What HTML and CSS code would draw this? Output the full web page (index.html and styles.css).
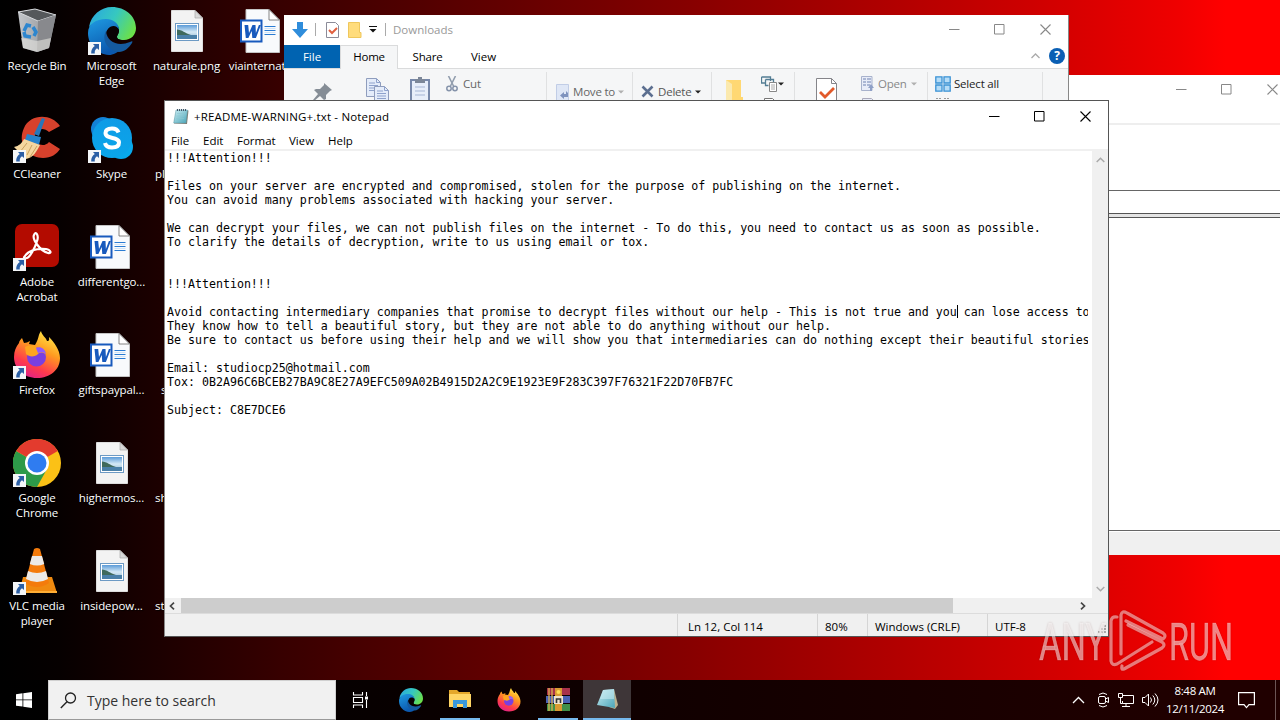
FILE: index.html
```html
<!DOCTYPE html>
<html lang="en">
<head>
<meta charset="utf-8">
<title>Desktop</title>
<link rel="stylesheet" href="styles.css">
</head>
<body>
<svg class="defs" width="0" height="0">
  <defs>
    <linearGradient id="edgeA" x1="0" y1="0.2" x2="1" y2="0.6"><stop offset="0" stop-color="#2aa8de"/><stop offset=".5" stop-color="#36c8c0"/><stop offset="1" stop-color="#6be04a"/></linearGradient>
    <linearGradient id="edgeB" x1="0" y1="0" x2="0.4" y2="1"><stop offset="0" stop-color="#1f9be2"/><stop offset="1" stop-color="#0b58ae"/></linearGradient>
    <linearGradient id="ffA" x1="0.8" y1="0" x2="0.3" y2="1"><stop offset="0" stop-color="#fff04a"/><stop offset=".4" stop-color="#ff9a20"/><stop offset=".75" stop-color="#ff3a4c"/><stop offset="1" stop-color="#e0218a"/></linearGradient>
    <linearGradient id="sky" x1="0" y1="0" x2="0" y2="1"><stop offset="0" stop-color="#5b9bd8"/><stop offset=".5" stop-color="#d5e9f5"/><stop offset="1" stop-color="#8fb5cf"/></linearGradient>
    <linearGradient id="skp" x1="0" y1="0" x2="0" y2="1"><stop offset="0" stop-color="#0f9be6"/><stop offset="1" stop-color="#0aa6ea"/></linearGradient>
    <linearGradient id="bin" x1="0" y1="0" x2="1" y2="0"><stop offset="0" stop-color="#c3c6ca"/><stop offset=".6" stop-color="#a1a4a8"/><stop offset="1" stop-color="#77797c"/></linearGradient>
    <linearGradient id="note" x1="0" y1="0" x2="1" y2="1"><stop offset="0" stop-color="#c9ecf2"/><stop offset="1" stop-color="#4aa5b8"/></linearGradient>
    <symbol id="shortcut" viewBox="0 0 13 13"><rect width="13" height="13" fill="#f4f6f8"/><path d="M5 2h6v6L9 6.200C7.200 7.500 6.500 9 6.800 11.500H3.200C3 8 4.500 5.500 6.800 4z" fill="#2b5fa5"/></symbol>
    <symbol id="edge" viewBox="0 0 48 48">
      <path d="M1 20C3 8 13 0 24 0c13 0 24 9 24 21 0 7-5 12-12 12-6 0-7-2-7-3 0-2 2-3 2-7 0-5-5-9-11-9-9 0-16 3-19 6z" fill="url(#edgeA)"/>
      <path d="M0 26C0 17 8 12 18 12c7 0 13 4 13 11-3-4-11-5-13 3-2 9 7 16 16 14-4 6-9 8-13 8C9 47 0 38 0 26z" fill="url(#edgeB)"/>
      <path d="M18 24c-5 9 2 20 13 21 5 0 10-4 13-9 1-2 0-2-2-1-12 5-23 0-24-11z" fill="#155a9f"/>
      <path d="M20 22c3-4 9-4 11 1 0 4-2 5-2 7 0 2 2 3 5 3-8 3-16-3-14-11z" fill="#0a0204"/>
    </symbol>
    <symbol id="firefox" viewBox="0 0 48 48">
      <path d="M6 12c0-2 2-4 3-5l2 5c2 0 4-1 6-2l-1 3 6 1c4-6 3-10 6-14 1 5 5 6 6 10 3 0 2-2 2-4 5 5 11 13 11 21 0 12-10 20-23 20S1 38 1 26c0-6 2-10 5-14z" fill="url(#ffA)"/>
      <circle cx="23.500" cy="26" r="9.500" fill="#7a3fe0"/><path d="M12 16c4-2 9-3 12 1 4 0 8 3 8 6-3-2-5-2-8 1-3 2-8 2-11-1z" fill="#ffa51f"/><path d="M23 17c4-2 9 0 10 6-2-2-5-2-8-1z" fill="#9059ff"/>
    </symbol>
    <symbol id="word" viewBox="0 0 40 44">
      <path d="M6 .5h23L39.500 11v32.500H6z" fill="#f8fafc" stroke="#c4c4c4"/><path d="M29 .5V11h10.500z" fill="#fff" stroke="#666" stroke-width=".8"/>
      <path d="M24.500 17.500h11M24.500 21.500h11M24.500 25.500h11" stroke="#2b7cd3"/><path d="M24.500 19.500h11M24.500 23.500h11" stroke="#cfe3f6"/>
      <rect x="1" y="11.500" width="20.500" height="21" fill="#fff" stroke="#185abd" stroke-width="2"/>
      <path d="M4.500 16h3.700l.8 8 3.500-8h3l.4 8 3-8h2l-5 13h-3.600l-.6-7-3.300 7H5.800z" fill="#185abd"/>
    </symbol>
    <symbol id="picture" viewBox="0 0 32 42">
      <path d="M.5.500H24L31.500 8v33.500H.5z" fill="#f3f3f3" stroke="#ddd"/><path d="M24 .5V8h7.500z" fill="#d9d9d9" stroke="#aaa" stroke-width=".7"/>
      <rect x="4.500" y="13.500" width="23" height="17" fill="#fff" stroke="#6d9ac4"/><rect x="6" y="15" width="20" height="14" fill="url(#sky)"/><path d="M6 19.500c5 0 8 4 14 5.500H6z" fill="#3f6a5c"/><path d="M6 25h20v4H6z" fill="#4a80a8"/>
    </symbol>
    <symbol id="notepad" viewBox="0 0 16 16">
      <path d="M3.500 1.500L15.500 2l-1.500 13.500L1 15z" fill="#807b70"/><path d="M3 1.500h11.500L13 14.500H.7z" fill="url(#note)" stroke="#5d9ba8" stroke-width=".5"/><path d="M4 1.500h10" stroke="#456" stroke-width="1.800" stroke-dasharray="1 1"/><path d="M4 5h8M3.500 7.500h8M3.200 10h8" stroke="#8dc6d2" stroke-width=".6"/>
    </symbol>
    <symbol id="min" viewBox="0 0 11 11"><path d="M0 5.500h10.500" stroke="currentColor"/></symbol>
    <symbol id="max" viewBox="0 0 11 11"><path d="M.5.500h9.500v9.500H.5z" fill="none" stroke="currentColor"/></symbol>
    <symbol id="close" viewBox="0 0 11 11"><path d="M.5.500l10 10m0-10l-10 10" stroke="currentColor" stroke-width="1.100"/></symbol>
    <symbol id="down" viewBox="0 0 6 4"><path d="M0 .5h6L3 3.500z" fill="currentColor"/></symbol>
    <symbol id="doc" viewBox="0 0 15 19"><path d="M.5.500h10l4 4v14H.5z" fill="#e4ecfa" stroke="#8f9dbd"/><path d="M10.500.500v4h4M3 5h6M3 7.500h9M3 10h9M3 12.500h9" fill="none" stroke="#8ea2cc"/></symbol>
  </defs>
</svg>

<div class="desktop">
  <div class="icons">
    <div class="item"><div class="pic"><svg width="48" height="48" viewBox="0 0 48 48"><path d="M5 5l5 36 14 4 12-4 7-33-21-6z" fill="url(#bin)"/><path d="M5 5L22 2l21 6-18 6z" fill="#55585b" stroke="#d7d9dc"/><path d="M25 14L43 8l-7 33-12 4z" fill="#88898d"/><path d="M8 31l16 3 14-3-2 10-12 4-14-4z" fill="#e4e2dd" opacity=".6"/><g fill="none" stroke="#2d86cf" stroke-width="3.500"><path d="M11 24l3-6 4 1M20 20l3 5-2 4M18 30l-6-1-1-4"/></g></svg></div><p>Recycle Bin</p></div>
    <div class="item"><div class="pic"><svg width="48" height="48"><use href="#edge"/></svg><svg class="sc"><use href="#shortcut"/></svg></div><p>Microsoft<br>Edge</p></div>
    <div class="item"><div class="pic"><svg width="32" height="42"><use href="#picture"/></svg></div><p>naturale.png</p></div>
    <div class="item"><div class="pic wordpic"><svg width="40" height="44"><use href="#word"/></svg></div><p>viainternat...</p></div>

    <div class="item"><div class="pic"><svg width="48" height="48" viewBox="0 0 48 48"><path d="M47 11C38-2 17-1 11 13c-7 15 3 30 19 30 8 0 14-4 17-9l-11-7c-6 7-16 1-14-7 2-7 9-8 14-3z" fill="#d7412c"/><path d="M29 3l3 1-6 17-5-2z" fill="#2777bb"/><path d="M14 19l14 3-2 8-14-5z" fill="#2683cc"/><path d="M11 24l16 6c-3 6-7 13-14 14L1 32c5-1 8-4 10-8z" fill="#f4d7a0"/><path d="M14 28l-7 9M19 30l-5 10M24 31l-7 11" stroke="#c9a15f"/></svg><svg class="sc"><use href="#shortcut"/></svg></div><p>CCleaner</p></div>
    <div class="item"><div class="pic"><svg width="48" height="48" viewBox="0 0 48 48"><circle cx="15" cy="14" r="12" fill="#1381d6"/><circle cx="33" cy="32" r="12" fill="#08a9ec"/><circle cx="24" cy="23" r="20" fill="url(#skp)"/><path d="M30.500 17.500C29.500 14.500 27 13.500 24 13.500c-4 0-6.500 1.700-6.500 4.500 0 6.500 13.500 3.500 13.500 9.500 0 3.500-3 5-7 5-4 0-6.500-2-7-4.500" fill="none" stroke="#fff" stroke-width="4"/></svg><svg class="sc"><use href="#shortcut"/></svg></div><p>Skype</p></div>
    <div class="item cut"><div class="pic"></div><p>pl</p></div>
    <div class="item"></div>

    <div class="item"><div class="pic"><svg width="48" height="48" viewBox="0 0 48 48"><rect x="2" y="1" width="44" height="43" rx="7" fill="#b30b00"/><path d="M12 33c3-5 11-8 21-7 5 1 6 5 2 4C27 28 19 16 21 12c2-5 5 1 3 6-2 7-7 16-10 17-3 1-4 0-2-2z" fill="none" stroke="#fff" stroke-width="2.200"/></svg><svg class="sc"><use href="#shortcut"/></svg></div><p>Adobe<br>Acrobat</p></div>
    <div class="item"><div class="pic wordpic"><svg width="40" height="44"><use href="#word"/></svg></div><p>differentgo...</p></div>
    <div class="item"></div>
    <div class="item"></div>

    <div class="item"><div class="pic"><svg width="48" height="48"><use href="#firefox"/></svg><svg class="sc"><use href="#shortcut"/></svg></div><p>Firefox</p></div>
    <div class="item"><div class="pic wordpic"><svg width="40" height="44"><use href="#word"/></svg></div><p>giftspaypal...</p></div>
    <div class="item cut far"><div class="pic"></div><p>s</p></div>
    <div class="item"></div>

    <div class="item"><div class="pic"><svg width="48" height="48" viewBox="0 0 48 48"><circle cx="24" cy="24" r="24" fill="#fbc116"/><path d="M24 24L3.200 12A24 24 0 0 0 24 48l10-18z" fill="#2d9a49"/><path d="M24 24L3.200 12a24 24 0 0 1 41.600 0z" fill="#e33b2e"/><circle cx="24" cy="24" r="12" fill="#fff"/><circle cx="24" cy="24" r="9.500" fill="#2f7cf0"/></svg><svg class="sc"><use href="#shortcut"/></svg></div><p>Google<br>Chrome</p></div>
    <div class="item"><div class="pic"><svg width="32" height="42"><use href="#picture"/></svg></div><p>highermos...</p></div>
    <div class="item cut"><div class="pic"></div><p>sh</p></div>
    <div class="item"></div>

    <div class="item"><div class="pic"><svg width="48" height="48" viewBox="0 0 48 48"><path d="M10 30h29l5 16H6z" fill="#f08a10"/><path d="M6 44h38v2H6z" fill="#ffae35"/><path d="M21 2q3-2 6 0l9 34q-12 8-24 0z" fill="#f47b0c"/><path d="M19 9h10l2.200 8q-7 3-14.400 0zM15 24q9 4 18 0l2 8q-11 6-22 0z" fill="#eceae8"/></svg><svg class="sc"><use href="#shortcut"/></svg></div><p>VLC media<br>player</p></div>
    <div class="item"><div class="pic"><svg width="32" height="42"><use href="#picture"/></svg></div><p>insidepow...</p></div>
    <div class="item cut"><div class="pic"></div><p>st</p></div>
    <div class="item"></div>
  </div>

  <section class="window backwin">
    <div class="bw-title"><div class="controls"><svg><use href="#min"/></svg><svg><use href="#max"/></svg><svg><use href="#close"/></svg></div></div>
    <div class="bw-tools"></div>
    <div class="bw-path"></div>
    <div class="bw-split"></div>
    <div class="bw-list"></div>
    <div class="bw-status"></div>
  </section>

  <section class="window explorer">
    <header class="ex-title">
      <svg width="18" height="18" viewBox="0 0 18 18"><path d="M6 1h6v7h5l-8 9-8-9h5z" fill="#2f8ddb"/></svg>
      <i class="bar"></i>
      <svg class="q1" width="13" height="16" viewBox="0 0 13 16"><path d="M.5.500h9l3 3v12H.5z" fill="#fff" stroke="#8b8b98"/><path d="M3 8l3 3 5-5" fill="none" stroke="#e0603f" stroke-width="2"/></svg>
      <svg class="q2" width="14" height="16" viewBox="0 0 14 16"><path d="M.5.500h11v10h1.500v5H.5z" fill="#ffdc7c" stroke="#efc75c"/></svg>
      <svg class="q3" width="8" height="7" viewBox="0 0 8 7"><path d="M0 .5h8" stroke="#111"/><path d="M.5 3h7L4 6.500z" fill="#111"/></svg>
      <i class="bar b2"></i>
      <span class="ex-name">Downloads</span>
      <div class="controls"><svg><use href="#min"/></svg><svg><use href="#max"/></svg><svg><use href="#close"/></svg></div>
    </header>
    <nav class="tabs">
      <span class="tab file">File</span><span class="tab home">Home</span><span class="tab share">Share</span><span class="tab view">View</span>
      <div class="help"><svg width="9" height="6" viewBox="0 0 9 6"><path d="M.5 5l4-4 4 4" fill="none" stroke="#aaa" stroke-width="1.300"/></svg><b>?</b></div>
    </nav>
    <div class="ribbon">
      <div class="grp g1">
        <svg class="pin" width="21" height="20" viewBox="0 0 21 20"><path d="M12 1l8 7-2 1-4 4v4l-2 1-4-4-6 5-1-1 5-6-4-4 2-1h4l4-4z" fill="#858d96"/></svg>
        <svg class="copy" width="24" height="26"><use href="#doc" width="15" height="19"/><use href="#doc" x="8" y="8" width="15" height="19"/></svg>
        <svg class="paste" width="20" height="26" viewBox="0 0 20 26"><rect x="1" y="3" width="18" height="24" fill="#e7eefa" stroke="#7788aa" stroke-width="2"/><path d="M5 2h10v4H5zM8 0h4v3H8z" fill="#7c8799"/><path d="M5 10h10M5 14h10M5 18h10" stroke="#a5b5d5"/></svg>
        <svg class="scis" width="12" height="16" viewBox="0 0 12 16"><path d="M2.500 0L8 11M9.500 0L4 11" stroke="#929eae" stroke-width="1.600"/><circle cx="3" cy="12.500" r="2.200" fill="none" stroke="#8593aa" stroke-width="1.500"/><circle cx="9" cy="12.500" r="2.200" fill="none" stroke="#8593aa" stroke-width="1.500"/></svg>
        <span class="cutlabel">Cut</span>
      </div>
      <div class="grp g2"><svg width="14" height="16" viewBox="0 0 14 16"><path d="M.5.500h12v16H.5z" fill="#dfe7f6" stroke="#c1cde6"/><path d="M12 9v4H8v2l-4-3.500L8 8v2h2V7z" fill="#7f93be"/></svg><span class="moveto">Move to</span><svg class="dn" width="6" height="4"><use href="#down"/></svg></div>
      <div class="grp g3"><svg width="13" height="13" viewBox="0 0 13 13"><path d="M1.500 1.500l10 10m0-10l-10 10" stroke="#5c6f90" stroke-width="2.600"/></svg><span class="delete">Delete</span><svg class="dn dark" width="6" height="4"><use href="#down"/></svg></div>
      <div class="grp g4"><svg class="fold" width="19" height="22" viewBox="0 0 19 22"><path d="M1 0h15v17h2v5H1z" fill="#ffd873"/><path d="M1 0l6 4v18H1z" fill="#fbe9ae"/></svg>
        <div class="stack"><svg width="18" height="16" viewBox="0 0 18 16"><path d="M.5 1h9v4M.5 1v6h4M4.500 3.500h8v3M4.500 3.500v6h3" fill="none" stroke="#537d94" stroke-width="1.300"/><path d="M8.500 6.500h7v9h-7z" fill="#fff" stroke="#888"/><path d="M10 9h4M10 11h4M10 13h4" stroke="#aaa"/></svg><svg width="12" height="12" viewBox="0 0 12 12"><path d="M.5.500h8l3 3v9H.5z" fill="#fff" stroke="#777"/></svg></div><svg class="dn dark" width="6" height="4"><use href="#down"/></svg></div>
      <div class="grp g5"><svg class="prop" width="21" height="24" viewBox="0 0 21 24"><path d="M.5.500h15l5 5V24H.5z" fill="#fff" stroke="#85858a"/><path d="M15.500.500v5h5" fill="none" stroke="#85858a"/><path d="M4 14l5 5 9-9" fill="none" stroke="#e25a2a" stroke-width="2.800"/></svg>
        <div class="stack"><svg width="14" height="16" viewBox="0 0 14 16"><path d="M.5.500h10.500v14H.5z" fill="#e8ecf8" stroke="#a8b2cc"/><path d="M2 3h3M6 3h4M2 6h3M6 6h4M2 9h3M6 9h3" stroke="#96a5c8" stroke-width="1.500"/><path d="M10 8l3 4h-2v3H9v-3H7z" fill="#8fa0c6"/></svg><svg width="12" height="12" viewBox="0 0 12 12"><path d="M.5.500h9l2 2v10H.5z" fill="#e8ecf8" stroke="#aab"/></svg></div><span class="open">Open</span><svg class="dn" width="6" height="4"><use href="#down"/></svg></div>
      <div class="grp g6"><div class="stack"><svg width="16" height="16" viewBox="0 0 16 16"><path d="M.8.800h6.200v6.200H.8zM9 .8h6.200v6.200H9zM.8 9h6.200v6.200H.8zM9 9h6.200v6.200H9z" fill="#b5dcf7" stroke="#3a92d5" stroke-width="1.300"/></svg><svg width="16" height="12" viewBox="0 0 16 12"><path d="M1 .5h5M9 .5h5" stroke="#999" stroke-dasharray="2 1"/></svg></div><span class="selall">Select all</span></div>
    </div>
  </section>

  <section class="window notepad">
    <header class="np-title"><svg class="np-icon" width="16" height="17"><use href="#notepad"/></svg><span class="np-name">+README-WARNING+.txt - Notepad</span>
      <div class="controls"><svg><use href="#min"/></svg><svg><use href="#max"/></svg><svg><use href="#close"/></svg></div></header>
    <nav class="menu"><span class="m1">File</span><span class="m2">Edit</span><span class="m3">Format</span><span class="m4">View</span><span class="m5">Help</span></nav>
    <div class="np-main">
<pre class="text">!!!Attention!!!

Files on your server are encrypted and compromised, stolen for the purpose of publishing on the internet.
You can avoid many problems associated with hacking your server.

We can decrypt your files, we can not publish files on the internet - To do this, you need to contact us as soon as possible.
To clarify the details of decryption, write to us using email or tox.


!!!Attention!!!

Avoid contacting intermediary companies that promise to decrypt files without our help - This is not true and you<i class="caret"></i> can lose access to
They know how to tell a beautiful story, but they are not able to do anything without our help.
Be sure to contact us before using their help and we will show you that intermediaries can do nothing except their beautiful stories

Email: studiocp25@hotmail.com
Tox: 0B2A96C6BCEB27BA9C8E27A9EFC509A02B4915D2A2C9E1923E9F283C397F76321F22D70FB7FC

Subject: C8E7DCE6</pre>
      <div class="vscroll"><svg width="9" height="6" viewBox="0 0 9 6"><path d="M.7 5l3.800-3.800L8.300 5" fill="none" stroke="#aaa" stroke-width="1.500"/></svg><svg width="9" height="6" viewBox="0 0 9 6"><path d="M.7 1l3.800 3.800L8.300 1" fill="none" stroke="#aaa" stroke-width="1.500"/></svg></div>
    </div>
    <div class="hscroll"><svg width="6" height="8" viewBox="0 0 6 8"><path d="M5 .7L1.500 4 5 7.300" fill="none" stroke="#444" stroke-width="1.700"/></svg><div class="thumb"></div><svg class="r" width="6" height="8" viewBox="0 0 6 8"><path d="M1 .7L4.500 4 1 7.300" fill="none" stroke="#444" stroke-width="1.700"/></svg></div>
    <footer class="status"><span class="s1">Ln 12, Col 114</span><span class="s2">80%</span><span class="s3">Windows (CRLF)</span><span class="s4">UTF-8</span><svg class="grip" width="10" height="10" viewBox="0 0 10 10"><path d="M7 1h2M4 4h2M7 4h2M1 7h2M4 7h2M7 7h2" stroke="#aaa" stroke-width="2"/></svg></footer>
  </section>

  <svg class="mark" width="200" height="66" viewBox="0 0 200 66">
    <g class="marktext"><text x="3" y="50" textLength="67" lengthAdjust="spacingAndGlyphs">ANY</text><text x="133" y="50" textLength="64" lengthAdjust="spacingAndGlyphs">RUN</text></g>
    <g fill="none" stroke="#fff" stroke-opacity=".48" stroke-width="3.200" stroke-linejoin="round" stroke-linecap="round"><path d="M81 7q-5-1-6 4v40q1 5 6 3l35-22"/><path d="M85 44V5q1-5 6-2l36 20q4 3 0 6L90 11"/><path d="M92 15l34 17q4 3 0 6L88 59q-3 1-2-3"/></g>
  </svg>
</div>

<footer class="taskbar">
  <div class="start"><svg width="16" height="16" viewBox="0 0 16 16"><path d="M0 2.200L6.500 1.300V7.500H0zM7.300 1.200L16 0v7.500H7.300zM0 8.300h6.500v6.300L0 13.700zM7.300 8.300H16V16l-8.700-1.200z" fill="#fff"/></svg></div>
  <div class="search"><svg width="17" height="17" viewBox="0 0 17 17"><circle cx="10.500" cy="6" r="5" fill="none" stroke="#222" stroke-width="1.300"/><path d="M7 9.700L.8 16" stroke="#222" stroke-width="1.400"/></svg><span>Type here to search</span></div>
  <div class="apps">
    <div class="app"><svg width="17" height="16" viewBox="0 0 17 16"><path d="M1.500 0v3h9V0M1.500 5.500h9v5h-9zM1.500 16v-3h9v3M14.500 0v4M14.500 8v8" fill="none" stroke="#fff" stroke-width="1.100"/><path d="M13 4.500h3v3h-3z" fill="#fff"/></svg></div>
    <div class="app e"><svg width="24" height="24"><use href="#edge"/></svg></div>
    <div class="app run"><svg width="22" height="20" viewBox="0 0 22 20"><path d="M0 1h8l2 2h11v4H0z" fill="#e4a72b"/><path d="M0 5h22v13H0z" fill="#ffd565"/><path d="M4 19v-8h14v8h-4v-4H8v4z" fill="#3a98dc"/></svg></div>
    <div class="app"><svg width="24" height="24"><use href="#firefox"/></svg></div>
    <div class="app run"><svg width="25" height="23" viewBox="0 0 25 23"><path d="M1 0h23v7H1z" fill="#a8324a"/><path d="M0 8h24v7H0z" fill="#4a62b5"/><path d="M1 16h23v7H1z" fill="#41904a"/><path d="M3 0v23M6 0v23" stroke="#d9b252" stroke-width="1.300"/><path d="M9 0h7v23H9z" fill="#d99a32"/><path d="M8 8h9v8H8z" fill="#eee3cc"/><path d="M10.500 15v-4h4v4" fill="none" stroke="#333" stroke-width="1.600"/><circle cx="12.500" cy="4" r="2" fill="#ffdc55"/></svg></div>
    <div class="app run active"><svg width="23" height="22" viewBox="0 0 23 22"><path d="M18 1l4 16-3 4-6-2z" fill="#bdb18e"/><path d="M7 2l11-1 1 19-18-3z" fill="url(#note)"/><path d="M7 2l11-1v10L4 11z" fill="#d0eff5" opacity=".5"/></svg></div>
  </div>
  <div class="tray">
    <svg width="13" height="8" viewBox="0 0 13 8"><path d="M1 7l5.500-5.500L12 7" fill="none" stroke="#fff" stroke-width="1.300"/></svg>
    <svg class="t2" width="13" height="16" viewBox="0 0 13 16"><g fill="none" stroke="#fff"><path d="M2 2.500q4-3 8 0M2 13.500q4 3 8 0"/><rect x="1.500" y="4.500" width="7" height="7" rx="1.500"/><path d="M8.500 7l3-1.500v5L8.500 9"/></g></svg>
    <svg class="t3" width="16" height="15" viewBox="0 0 16 15"><g fill="none" stroke="#fff"><path d="M5 2.500h10.500v8H4.500V8M8 10.500v3M4 13.500h8"/><path d="M.5.500h4v4h-4zM2.500 4.500v6h2" /></g></svg>
    <svg class="t4" width="17" height="14" viewBox="0 0 17 14"><g fill="none" stroke="#fff"><path d="M.5 4.500H3L6.500 1v12L3 9.500H.5zM8.500 4.500q2 2.500 0 5M10.800 2.500q4 4.500 0 9M13 .5q6 6.500 0 13"/></g></svg>
    <div class="clock"><span class="c1">8:48 AM</span><span class="c2">12/11/2024</span></div>
    <svg class="t5" width="17" height="17" viewBox="0 0 17 17"><path d="M.6.600h15.800v12H11l-2.500 3-2.500-3H.6z" fill="none" stroke="#fff" stroke-width="1.200"/></svg>
    <i class="peek"></i>
  </div>
</footer>
</body>
</html>
```
FILE: styles.css
```css
* { box-sizing: border-box; }
body {
  margin: 0; width: 1280px; height: 720px; overflow: hidden;
  display: flex; flex-direction: column;
  font: 11.5px/15px "Open Sans", "Noto Sans", sans-serif; color: #000;
}
svg { display: block; flex: none; }
.defs { position: absolute; }
span { white-space: nowrap; }
.desktop {
  position: relative; height: 680px; overflow: hidden;
  background: linear-gradient(90deg, #000 0, #060000 60px, #1a0000 150px, #380000 285px, #850000 680px, #d60000 1070px, #f00000 1180px, #f00 1225px);
}

/* desktop shortcuts */
.icons { display: grid; grid-template-columns: 74px 75px 75px 75px; grid-auto-rows: 108px; }
.item { color: #fff; text-align: center; padding-top: 7px; }
.pic { position: relative; width: 48px; height: 48px; margin: 0 auto 3px; display: flex; align-items: center; justify-content: center; }
.pic .sc { position: absolute; left: 0; bottom: 0; width: 13px; height: 13px; }
.wordpic { padding-right: 4px; }
.item p { margin: 0; white-space: nowrap; letter-spacing: -.1px; text-shadow: 1px 1px 1px #000; }
.item.cut { text-align: left; padding-left: 6px; }
.item.far { padding-left: 12px; }

.window { position: absolute; background: #fff; display: flex; flex-direction: column; }
.controls { display: flex; gap: 34.5px; margin-left: auto; }
.controls svg { width: 11px; height: 11px; }

/* window at the back */
.backwin { left: 700px; top: 75px; width: 590px; height: 480px; }
.bw-title { height: 48px; padding: 9px 12.5px 0 0; display: flex; color: #888; }
.bw-tools { height: 68px; border-top: 2px solid #eee; border-bottom: 1px solid #666; }
.bw-path { height: 23px; border-bottom: 1px solid #555; }
.bw-split { height: 4px; background: #e4e4e4; border-bottom: 1px solid #555; }
.bw-list { height: 313px; border-bottom: 1px solid #666; }
.bw-status { flex: 1; background: #f0f0f0; border-top: 1px solid #fff; }

/* file explorer */
.explorer { left: 284px; top: 15px; width: 785px; height: 500px; border-right: 1px solid #888; }
.ex-title { height: 30px; display: flex; align-items: center; padding: 0 17.5px 1px 7px; color: #888; }
.bar { width: 1px; height: 13px; background: #aaa; margin-left: 6px; }
.q1 { margin-left: 10px; }
.q2 { margin-left: 9px; }
.q3 { margin-left: 7px; }
.b2 { margin-left: 8px; }
.ex-name { margin-left: 7px; color: #999; }
.tabs { height: 24px; display: flex; border-bottom: 1px solid #dadbdc; }
.tab { height: 24px; line-height: 24px; text-align: center; }
.file { width: 56px; height: 23px; background: #0063b1; color: #fff; }
.home { width: 58px; background: #f5f6f7; border: 1px solid #dadbdc; border-bottom: 0; line-height: 22px; letter-spacing: -.3px; }
.share { width: 59px; letter-spacing: -.2px; }
.view { width: 53px; }
.help { margin-left: auto; display: flex; align-items: center; gap: 9px; padding: 0 3px 1px 0; }
.help b { width: 16px; height: 16px; border-radius: 8px; background: #0a5fb4; color: #fff; text-align: center; line-height: 16px; font-size: 12px; }
.ribbon { flex: 1; display: flex; align-items: flex-start; background: #f5f6f7; color: #666; letter-spacing: -.2px; }
.grp { display: flex; align-items: flex-start; height: 60px; margin-top: 3px; border-right: 1px solid #e0e1e2; flex: none; }
.dn { color: #b0b0b0; }
.dn.dark { color: #222; }
.g1 { width: 263px; padding-left: 28px; }
.pin { margin-top: 10px; }
.copy { margin: 6px 0 0 33px; }
.paste { margin: 5px 0 0 20px; }
.scis { margin: 4px 0 0 16px; }
.cutlabel { margin: 4px 0 0 5px; }
.g2 { width: 86px; padding: 12px 0 0 9px; }
.moveto { margin: 0 3px 0 3px; }
.g2 .dn, .g3 .dn { margin-top: 6px; }
.g3 { width: 79px; padding: 12px 0 0 8px; color: #555; }
.g3 svg:first-child { margin-top: 1px; }
.delete { margin: 0 3px 0 4px; }
.g4 { width: 83px; padding-left: 13px; }
.fold { margin-top: 8px; }
.stack { display: flex; flex-direction: column; align-items: center; gap: 6px; margin-top: 4px; }
.g4 .stack { margin-left: 17px; }
.g4 .dn { margin: 10px 0 0 -1px; }
.g5 { width: 133px; padding-left: 21px; }
.prop { margin-top: 6px; }
.g5 .stack { margin-left: 24px; }
.open { margin: 4px 4px 0 3px; color: #888; }
.g5 .dn { margin-top: 10px; }
.g6 { width: 115px; padding-left: 7px; color: #222; }
.selall { margin: 4px 0 0 3px; }

/* notepad */
.notepad { left: 164px; top: 100px; width: 945px; height: 537px; border: 1px solid #555; border-left-color: #888; }
.np-title { height: 30px; display: flex; flex: none; align-items: center; padding: 0 17.5px 0 8px; }
.np-name { margin-left: 5px; letter-spacing: .17px; }
.menu { height: 20px; display: flex; flex: none; line-height: 20px; padding-left: 6px; border-bottom: 2px solid #f0f0f0; }
.m1 { width: 32px; }
.m2 { width: 34px; }
.m3 { width: 52px; }
.m4 { width: 39px; }
.np-main { height: 447px; flex: none; display: flex; justify-content: space-between; }
.text { margin: 0; padding-left: 2px; width: 923px; overflow: hidden; font: 11.628px/14px "DejaVu Sans Mono", "Liberation Mono", monospace; }
.caret { display: inline-block; width: 1px; height: 13px; margin-right: -1px; background: #000; vertical-align: top; }
.vscroll { width: 16px; background: #f0f0f0; display: flex; flex-direction: column; justify-content: space-between; align-items: center; padding: 6px 0 6px; }
.hscroll { height: 15px; flex: none; background: #f0f0f0; display: flex; align-items: center; padding: 0 22px 0 4px; }
.thumb { width: 772px; height: 15px; background: #cdcdcd; margin-left: 6px; }
.hscroll .r { margin-left: auto; }
.status { height: 23px; flex: none; display: flex; background: #f0f0f0; border-top: 1px solid #dcdcdc; padding-left: 512px; line-height: 25px; }
.status span { height: 22px; border-left: 1px solid #d5d5d5; }
.s1 { width: 140px; padding-left: 10px; }
.s2 { width: 50px; padding-left: 7px; }
.s3 { width: 120px; padding-left: 7px; }
.s4 { padding-left: 7px; }
.grip { margin: 11px 1px 0 auto; }

.mark { position: absolute; left: 1036px; top: 610px; overflow: visible; filter: drop-shadow(0 0 1px rgba(80, 0, 0, .35)); }
.marktext { font: 400 51px Roboto, "Open Sans", sans-serif; fill: #fff; fill-opacity: .52; stroke: #fff; stroke-opacity: .3; stroke-width: .5px; }

/* taskbar */
.taskbar { height: 40px; display: flex; background: linear-gradient(90deg, #000 0, #060000 340px, #120000 700px, #200000 1200px); }
.start { width: 48px; display: flex; align-items: center; justify-content: center; }
.search { width: 288px; background: #f1f1f1; border: 1px solid #d0d0d0; border-bottom-color: #999; display: flex; align-items: center; padding-left: 11px; color: #333; font-size: 14px; }
.search span { margin-left: 10px; }
.apps { display: flex; }
.app { width: 48px; margin-right: 1px; display: flex; align-items: center; justify-content: center; }
.e { margin-left: 2px; }
.run { border: solid #76b9ed; border-width: 0 0 2px; width: 40px; margin: 0 5px 0 4px; }
.active { width: 48px; margin: 0; background: #3e3638; }
.tray { margin-left: auto; display: flex; align-items: center; color: #fff; }
.t2 { margin-left: 12px; }
.t3 { margin-left: 8px; }
.t4 { margin-left: 8px; }
.clock { width: 72px; display: flex; flex-direction: column; align-items: center; line-height: 18px; letter-spacing: -.3px; }
.t5 { margin-left: 7px; }
.peek { width: 1px; height: 40px; background: #6b5555; margin: 0 4px 0 20px; }
```
